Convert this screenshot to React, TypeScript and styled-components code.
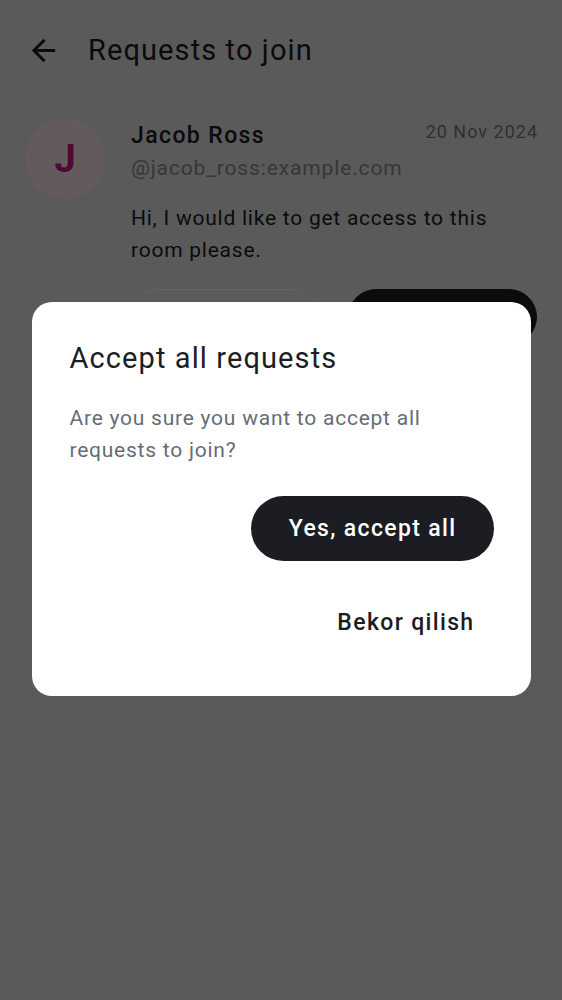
import React from 'react';
import styled, {createGlobalStyle} from 'styled-components';

const GlobalStyle = createGlobalStyle`
	html, body {
		margin: 0;
		padding: 0;
		background: #e8e8e8;
	}

	body {
		font-family: Roboto, 'Noto Sans', 'Liberation Sans', sans-serif;
		color: #1b1d22;
	}

	* {
		box-sizing: border-box;
	}
`;

const Screen = styled.div`
	width: 562px;
	height: 1000px;
	background: #e8e8e8;
	overflow: hidden;
`;

const TopBar = styled.header`
	height: 100px;
	display: flex;
	align-items: center;
	padding-left: 26px;
	gap: 27px;
`;

const BackIcon = styled.svg`
	width: 35px;
	height: 35px;
	fill: #1b1d22;
`;

const Title = styled.h1`
	margin: 0;
	font-size: 29px;
	font-weight: 400;
	line-height: 36px;
	letter-spacing: 1.1px;
	color: #1b1d22;
`;

const Request = styled.div`
	display: flex;
	gap: 26px;
	padding: 19px 25px 0 25px;
`;

const Avatar = styled.div`
	flex: none;
	width: 80px;
	height: 80px;
	border-radius: 50%;
	background: #fde8ee;
	color: #c81a80;
	display: flex;
	align-items: center;
	justify-content: center;
	font-size: 38px;
	font-weight: 700;
`;

const Body = styled.div`
	flex: 1;
	display: flex;
	flex-direction: column;
	padding-top: 1px;
`;

const NameRow = styled.div`
	display: flex;
	justify-content: space-between;
	align-items: flex-start;
`;

const Name = styled.div`
	font-size: 23px;
	font-weight: 500;
	line-height: 32px;
	letter-spacing: 1.4px;
	color: #1b1d22;
`;

const Date = styled.div`
	font-size: 18px;
	line-height: 22px;
	letter-spacing: 1px;
	margin-right: -1px;
	color: #7a7d83;
	padding-top: 1px;
`;

const Handle = styled.div`
	font-size: 21px;
	line-height: 32px;
	letter-spacing: 0.87px;
	color: #8a8d93;
`;

const Message = styled.p`
	margin: 18px 0 0;
	font-size: 21px;
	line-height: 32px;
	letter-spacing: 0.76px;
	color: #1b1d22;
`;

const Actions = styled.div`
	display: flex;
	gap: 28px;
	margin-top: 23px;
`;

const PillButton = styled.button<{$filled?: boolean}>`
	flex: 1;
	height: 56px;
	border-radius: 28px;
	font-family: inherit;
	font-size: 21px;
	font-weight: 500;
	border: 1px solid ${p => (p.$filled ? '#1b1d22' : '#ffffff')};
	background: ${p => (p.$filled ? '#1b1d22' : 'transparent')};
	color: ${p => (p.$filled ? '#ffffff' : '#1b1d22')};
`;

const Scrim = styled.div`
	position: fixed;
	inset: 0;
	background: rgba(0, 0, 0, 0.61);
	display: flex;
	align-items: center;
	justify-content: center;
`;

const Dialog = styled.div`
	width: 499px;
	margin-top: -2px;
	background: #ffffff;
	border-radius: 20px;
	padding: 36px 37px 41px 38px;
	display: flex;
	flex-direction: column;
`;

const DialogTitle = styled.h2`
	margin: 0;
	font-size: 29px;
	font-weight: 400;
	line-height: 40px;
	letter-spacing: 1.1px;
	color: #1b1d22;
`;

const DialogText = styled.p`
	margin: 24px 0 0;
	font-size: 21px;
	line-height: 32px;
	letter-spacing: 0.76px;
	color: #656d77;
`;

const DialogActions = styled.div`
	display: flex;
	flex-direction: column;
	align-items: flex-end;
	gap: 29px;
	margin-top: 30px;
`;

const DialogButton = styled.button<{$primary?: boolean}>`
	height: 65px;
	border: none;
	border-radius: 33px;
	padding: 0 ${p => (p.$primary ? '37px 0 38px' : '19px 0 20px')};
	font-family: inherit;
	font-size: 23px;
	font-weight: 500;
	letter-spacing: 1.35px;
	background: ${p => (p.$primary ? '#1b1d22' : 'transparent')};
	color: ${p => (p.$primary ? '#ffffff' : '#1b1d22')};
`;

export default function App() {
	return (
		<Screen>
			<GlobalStyle />
			<TopBar>
				<BackIcon viewBox='0 0 24 24'>
					<path d='M20 11H7.83l5.59-5.59L12 4l-8 8 8 8 1.41-1.41L7.83 13H20v-2z' />
				</BackIcon>
				<Title>Requests to join</Title>
			</TopBar>
			<Request>
				<Avatar>J</Avatar>
				<Body>
					<NameRow>
						<Name>Jacob Ross</Name>
						<Date>20 Nov 2024</Date>
					</NameRow>
					<Handle>@jacob_ross:example.com</Handle>
					<Message>Hi, I would like to get access to this room please.</Message>
					<Actions>
						<PillButton>Decline</PillButton>
						<PillButton $filled>Accept</PillButton>
					</Actions>
				</Body>
			</Request>
			<Scrim>
				<Dialog>
					<DialogTitle>Accept all requests</DialogTitle>
					<DialogText>Are you sure you want to accept all requests to join?</DialogText>
					<DialogActions>
						<DialogButton $primary>Yes, accept all</DialogButton>
						<DialogButton>Bekor qilish</DialogButton>
					</DialogActions>
				</Dialog>
			</Scrim>
		</Screen>
	);
}
